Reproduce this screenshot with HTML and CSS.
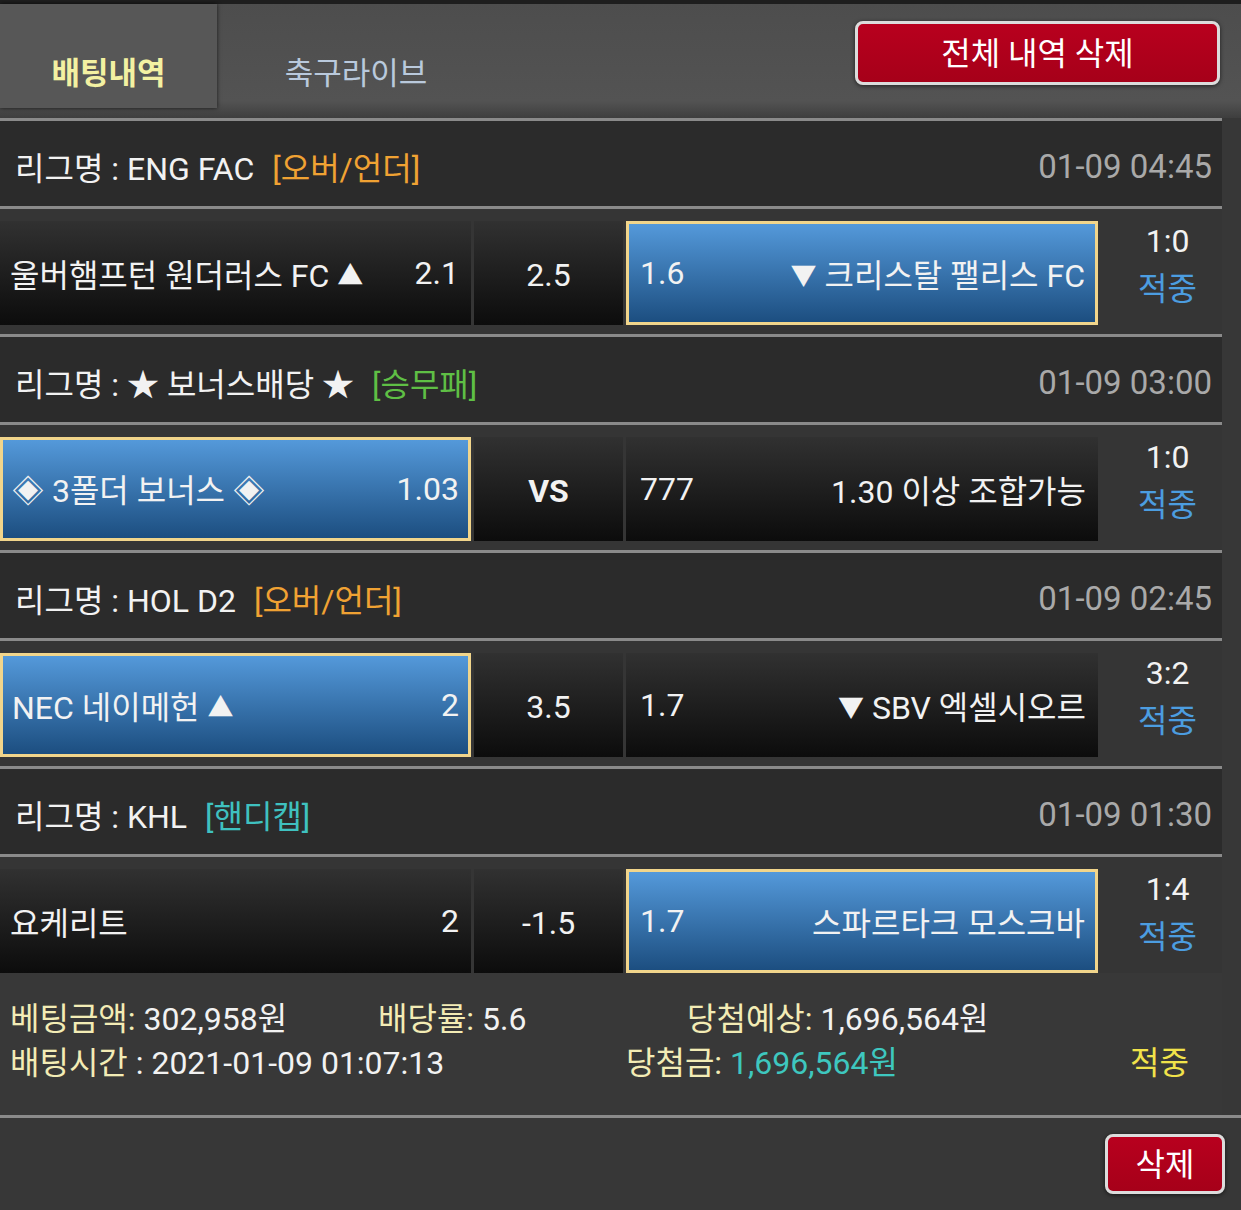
FILE: index.html
```html
<!DOCTYPE html>
<html lang="ko">
<head>
    <meta charset="UTF-8">
    <title>배팅내역</title>
    <link rel="stylesheet" href="styles.css">
</head>
<body>
    <!-- Top tabs -->
    <div class="topbar">
        <div class="tabs">
            <div class="tab active">배팅내역</div>
            <div class="tab">축구라이브</div>
        </div>
        <button class="btn-red btn-all">전체 내역 삭제</button>
    </div>

    <!-- Bet slip -->
    <div class="list">
        <div class="league">
            <div class="league-name">리그명 : ENG FAC <span class="tag orange">[오버/언더]</span></div>
            <div class="league-time">01-09 04:45</div>
        </div>
        <div class="match">
            <div class="cell home"><span>울버햄프턴 원더러스 FC <i class="arrow">▲</i></span><span>2.1</span></div>
            <div class="cell draw">2.5</div>
            <div class="cell away sel"><span>1.6</span><span><i class="arrow">▼</i> 크리스탈 팰리스 FC</span></div>
            <div class="result"><span>1:0</span><span class="hit">적중</span></div>
        </div>

        <div class="league">
            <div class="league-name">리그명 : ★ 보너스배당 ★ <span class="tag green">[승무패]</span></div>
            <div class="league-time">01-09 03:00</div>
        </div>
        <div class="match">
            <div class="cell home sel"><span>◈ 3폴더 보너스 ◈</span><span>1.03</span></div>
            <div class="cell draw vs">VS</div>
            <div class="cell away"><span>777</span><span>1.30 이상 조합가능</span></div>
            <div class="result"><span>1:0</span><span class="hit">적중</span></div>
        </div>

        <div class="league">
            <div class="league-name">리그명 : HOL D2 <span class="tag orange">[오버/언더]</span></div>
            <div class="league-time">01-09 02:45</div>
        </div>
        <div class="match">
            <div class="cell home sel"><span>NEC 네이메헌 <i class="arrow">▲</i></span><span>2</span></div>
            <div class="cell draw">3.5</div>
            <div class="cell away"><span>1.7</span><span><i class="arrow">▼</i> SBV 엑셀시오르</span></div>
            <div class="result"><span>3:2</span><span class="hit">적중</span></div>
        </div>

        <div class="league">
            <div class="league-name">리그명 : KHL <span class="tag cyan">[핸디캡]</span></div>
            <div class="league-time">01-09 01:30</div>
        </div>
        <div class="match last">
            <div class="cell home"><span>요케리트</span><span>2</span></div>
            <div class="cell draw">-1.5</div>
            <div class="cell away sel"><span>1.7</span><span>스파르타크 모스크바</span></div>
            <div class="result"><span>1:4</span><span class="hit">적중</span></div>
        </div>

        <!-- Summary -->
        <div class="summary">
            <div class="sum-row row-1">
                <span class="c1"><span class="label">베팅금액:</span> 302,958원</span>
                <span class="c2"><span class="label">배당률:</span> 5.6</span>
                <span><span class="label">당첨예상:</span> 1,696,564원</span>
            </div>
            <div class="sum-row row-2">
                <span class="c1"><span class="label">배팅시간</span> : 2021-01-09 01:07:13</span>
                <span class="c2"><span class="label">당첨금:</span> <span class="won">1,696,564원</span></span>
                <span class="status">적중</span>
            </div>
        </div>
    </div>

    <div class="bottom">
        <button class="btn-red btn-del">삭제</button>
    </div>
</body>
</html>
```

FILE: styles.css
```css
/* Global */
body {
    margin: 0;
    padding: 0;
    background: #373737;
    font-family: Roboto, "Noto Sans CJK KR", sans-serif;
    font-size: 32px;
    color: #f2f2f2;
}

/* Top bar with tabs */
.topbar {
    display: flex;
    justify-content: space-between;
    align-items: flex-start;
    height: 114px;
    border-top: 4px solid #1e1e1e;
    background: linear-gradient(#4d4d4d, #535353 85%, #3e3e3e);
}

.tabs {
    display: flex;
    height: 104px;
}

.tab {
    display: flex;
    align-items: flex-end;
    justify-content: center;
    width: 278px;
    padding-bottom: 14px;
    box-sizing: border-box;
    line-height: 40px;
    color: #b9c9dc;
    font-size: 31px;
}

.tab.active {
    width: 217px;
    background: #575757;
    box-shadow: 0 0 4px rgba(0, 0, 0, 0.7);
    color: #f3f1a2;
    font-weight: bold;
}

/* Red buttons */
.btn-red {
    font-family: Roboto, "Noto Sans CJK KR", sans-serif;
    font-size: 32px;
    color: #fff;
    background: linear-gradient(#b8001e, #a60019);
    border: 3px solid #dcdcdc;
    border-radius: 8px;
    box-shadow: 0 1px 4px rgba(0, 0, 0, 0.6);
    padding: 0 0 4px;
}

.btn-all {
    width: 365px;
    height: 64px;
    margin: 17px 21px 0 0;
}

/* List */
.list {
    width: 1222px;
}

.league {
    display: flex;
    justify-content: space-between;
    align-items: center;
    height: 85px;
    padding: 5px 10px 0 15px;
    box-sizing: border-box;
    border-top: 3px solid #8a8a8a;
    background: #2b2b2b;
}

.league {
    height: 88px;
}

.league-time {
    color: #a9a9a9;
    font-size: 33px;
}

.tag {
    margin-left: 10px;
}

.orange { color: #f0a233; }
.green { color: #5fbf45; }
.cyan { color: #3fc1c0; }

.match {
    display: flex;
    gap: 3px;
    padding: 12px 0 9px;
    border-top: 3px solid #8a8a8a;
    background: #353535;
}

.match.last {
    padding-bottom: 0;
}

.cell {
    display: flex;
    justify-content: space-between;
    align-items: center;
    height: 104px;
    padding: 0 12px 0 10px;
    box-sizing: border-box;
    background: linear-gradient(#313131, #0c0c0c);
    white-space: nowrap;
}

.arrow {
    font-style: normal;
    font-size: 26px;
    vertical-align: 2px;
}

.home { width: 471px; }

.draw {
    width: 149px;
    justify-content: center;
    padding: 4px 0 0;
}

.draw.vs {
    font-weight: bold;
}

.away {
    width: 472px;
    padding: 0 12px 0 14px;
}

.cell.sel {
    background: linear-gradient(#5499da, #1c4e80);
    border: 3px solid #f1d58b;
    padding: 0 9px 0 9px;
}

.away.sel {
    padding: 0 10px 0 11px;
}

.result {
    flex: 1;
    display: flex;
    flex-direction: column;
    align-items: center;
    padding: 0 0 0 12px;
    margin-top: -4px;
    line-height: 48px;
}

.hit {
    color: #4c9de0;
}

/* Summary */
.summary {
    height: 142px;
    padding: 24px 0 0 10px;
    box-sizing: border-box;
    background: #383838;
}

.sum-row {
    display: flex;
    line-height: 44px;
    white-space: nowrap;
}

.label {
    color: #f3ecb5;
}

.row-1 .c1 { width: 368px; }
.row-1 .c2 { width: 309px; }
.row-2 .c1 { width: 616px; }
.row-2 .c2 { width: 504px; }

.won {
    color: #3ec7bf;
}

.status {
    color: #f1e24a;
}

/* Bottom */
.bottom {
    display: flex;
    justify-content: flex-end;
    height: 92px;
    padding: 16px 16px 0 0;
    box-sizing: border-box;
    border-top: 3px solid #8a8a8a;
}

.btn-del {
    width: 120px;
    height: 60px;
}
```
